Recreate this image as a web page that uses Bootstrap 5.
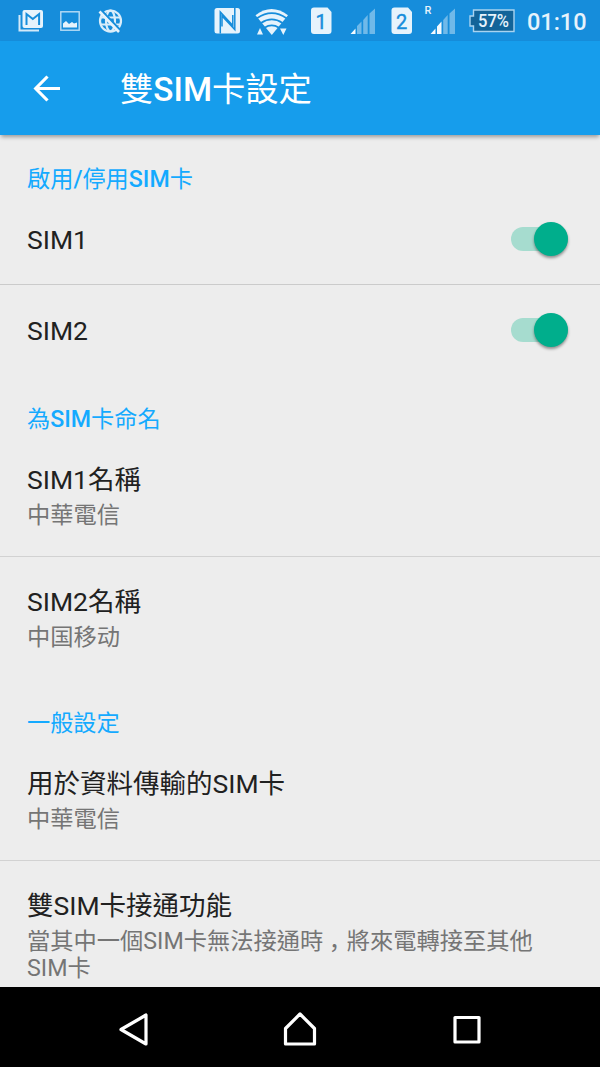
<!DOCTYPE html>
<html lang="zh-Hant">
<head>
<meta charset="utf-8">
<meta name="viewport" content="width=device-width, initial-scale=1">
<title>雙SIM卡設定</title>
<link href="https://cdn.jsdelivr.net/npm/bootstrap@5.3.0/dist/css/bootstrap.min.css" rel="stylesheet">
<style>
body{font-family:Roboto,"Noto Sans CJK TC",sans-serif;background:#ededed;color:#212121;height:1067px}
.statusbar{height:41px;background:#168ddb;color:#e6f3fc}
.statusbar svg{display:block;font-family:Roboto,sans-serif}
.appbar{height:94px;background:#169dec;box-shadow:0 3px 4px -1px rgba(0,0,0,.35);z-index:1;padding-left:27px}
.appbar h1{font-size:33.3px;line-height:40px;margin-left:53px;padding-top:3px;font-weight:400}
.latin{font-weight:500}
.section-title{height:60px;padding:30px 27px 0;font-size:23.2px;line-height:29px;color:#14aaff;font-weight:400}
.section-title.first{height:59px}
.pref{padding:0 27px;background:transparent;border:0;border-radius:0}
.pref+.pref{border-top:1px solid #cbcbcb}
.pref-switch{height:90px;padding-right:32px}
.pref-switch+.pref-switch{height:91px}
.pref-switch .pref-title{padding-top:2px}
.pref-double{height:121px;padding-top:27px}
.pref-double+.pref-double{height:123px;padding-top:27px}
.pref+.pref-double{border-top-color:#d2d2d2}
.pref-title{font-size:26.5px;line-height:36px;color:#212121}
.pref-sum{font-size:23.25px;line-height:27px;color:#757575;margin-top:4px}
.comma{font-family:"Noto Sans CJK JP",sans-serif;font-feature-settings:"halt";line-height:1;margin:0 6.5px 0 5.5px}
.switch-track{width:57px;height:24px;border-radius:12px;background:#a6dccf}
.switch-knob{width:34px;height:34px;background:#00ae8c;box-shadow:0 2px 3px rgba(0,0,0,.4)}
.settings{height:852px}
.navkeys{height:80px;background:#000}
</style>
</head>
<body class="overflow-hidden">
<header class="statusbar">
<svg width="600" height="41" viewBox="0 0 600 41" fill="#e6f3fc">
  <!-- mail -->
  <path d="M19.500 15v15.500H39" fill="none" stroke="#d3e9f9" stroke-width="2"/>
  <rect x="22.500" y="10" width="20.500" height="18" rx="2"/>
  <path d="M26.500 25V14l6.300 5 6.300-5v11" fill="none" stroke="#168ddb" stroke-width="2"/>
  <!-- picture -->
  <rect x="60.800" y="11.800" width="18.400" height="18.400" fill="none" stroke="#b9ddf6" stroke-width="1.400"/>
  <path d="M63 27.500v-4l3-2.500 3 3 3-2 2 1.500 3-1v5z"/>
  <!-- globe, crossed out -->
  <g fill="none" stroke="#d9edfa" stroke-width="2.200">
    <circle cx="110.500" cy="21" r="10.500"/><ellipse cx="110.500" cy="21" rx="4.500" ry="10.300"/>
    <path d="M101 17.500h19M101 24.500h19"/>
    <path d="M101 10l20 21" stroke="#168ddb" stroke-width="2.400"/>
    <path d="M99.500 11.500l19.500 20.500" stroke="#e6f3fc" stroke-width="2.600"/>
  </g>
  <!-- NFC -->
  <rect x="214.500" y="8" width="25.500" height="25.500" rx="2.500"/>
  <path d="M220.300 33.500V12l12.500 13.500V15M234.800 8v21.500L222 16v10.500" fill="none" stroke="#168ddb" stroke-width="1.500"/>
  <!-- Wi-Fi -->
  <path d="M255.500 15.200Q271.500 3 288 15.200L271.800 35z"/>
  <g fill="none" stroke="#168ddb" stroke-width="1.800"><path d="M257 18.300q14.800-10.500 29.500 0M261 23q10.800-7.200 21.500 0M264.500 27.700q7.200-4.500 14.500 0"/></g>
  <path d="M257 34.500l3-6.500 3 6.500zM280 28.500h6.500l-3.200 6.500z"/>
  <!-- SIM 1 and SIM 2 -->
  <path d="M314 7.500h13.500l4 4.500v19a3 3 0 0 1-3 3H314a3 3 0 0 1-3-3V10.500a3 3 0 0 1 3-3z"/>
  <path d="M394.500 7.500H408l4 4.500v19a3 3 0 0 1-3 3h-14.500a3 3 0 0 1-3-3V10.500a3 3 0 0 1 3-3z"/>
  <g fill="#168ddb" stroke="#168ddb" stroke-width=".4" font-size="20" text-anchor="middle"><text x="321" y="28.500">1</text><text x="401.500" y="28.500">2</text></g>
  <!-- signal strength -->
  <path d="M350.500 34l5-5.500V34zM430.500 34l5-5.500V34zM437 34v-7.500l4.500-5V34z" fill="#f3f9fe"/>
  <path d="M357 34v-8l4.500-4.500V34zM363.200 34V20l4.500-5V34zM369.500 34V13.500l5.500-5V34zM443.200 34V20l4.500-5V34zM449.500 34V13.500l5.500-5V34z" fill="#70b9e9"/>
  <text x="424.500" y="13.500" font-size="11" font-weight="500">R</text>
  <!-- battery -->
  <path d="M473.500 10h40.500v21.500h-40.500V26H470v-10h3.500z" fill="#126499" stroke="#a9d3f0" stroke-width="1.400"/>
  <text transform="translate(478 26.900) scale(.92 1)" font-size="18" font-weight="500">57%</text>
  <text x="527" y="30" font-size="23.500" font-weight="500" textLength="59.500">01:10</text>
</svg>
</header>
<nav class="appbar position-relative d-flex align-items-center text-white">
  <svg width="40" height="40" viewBox="0 0 40 40" fill="none" stroke="#fff" stroke-width="3.200"><path d="M33 20.500H9M20.500 8.500L8.700 20.500l11.800 12"/></svg>
  <h1 class="mb-0">雙<span class="latin">SIM</span>卡設定</h1>
</nav>
<main class="settings overflow-hidden">
  <h2 class="section-title first mb-0">啟用<span class="latin">/</span>停用<span class="latin">SIM</span>卡</h2>
  <div class="pref pref-switch d-flex align-items-center justify-content-between">
    <div class="pref-title">SIM1</div>
    <div class="switch-track d-flex align-items-center justify-content-end"><div class="switch-knob rounded-circle flex-shrink-0"></div></div>
  </div>
  <div class="pref pref-switch d-flex align-items-center justify-content-between">
    <div class="pref-title">SIM2</div>
    <div class="switch-track d-flex align-items-center justify-content-end"><div class="switch-knob rounded-circle flex-shrink-0"></div></div>
  </div>
  <h2 class="section-title mb-0">為<span class="latin">SIM</span>卡命名</h2>
  <div class="pref pref-double"><div class="pref-title">SIM1名稱</div><div class="pref-sum">中華電信</div></div>
  <div class="pref pref-double"><div class="pref-title">SIM2名稱</div><div class="pref-sum" lang="zh-Hans">中国移动</div></div>
  <h2 class="section-title mb-0">一般設定</h2>
  <div class="pref pref-double"><div class="pref-title">用於資料傳輸的SIM卡</div><div class="pref-sum">中華電信</div></div>
  <div class="pref pref-double"><div class="pref-title">雙SIM卡接通功能</div><div class="pref-sum">當其中一個SIM卡無法接通時<span class="comma" lang="ja">，</span>將來電轉接至其他<br>SIM卡</div></div>
</main>
<footer class="navkeys">
<svg class="d-block" width="600" height="80" viewBox="0 0 600 80" fill="none" stroke="#fff" stroke-width="3.200" stroke-linejoin="round">
  <path d="M121 42.500L146 28v29z"/>
  <path d="M300 27l14.500 14.500v15.500h-29V41.500z"/>
  <rect x="455" y="30.500" width="24" height="24.500"/>
</svg>
</footer>
<script src="https://cdn.jsdelivr.net/npm/bootstrap@5.3.0/dist/js/bootstrap.bundle.min.js"></script>
</body>
</html>
